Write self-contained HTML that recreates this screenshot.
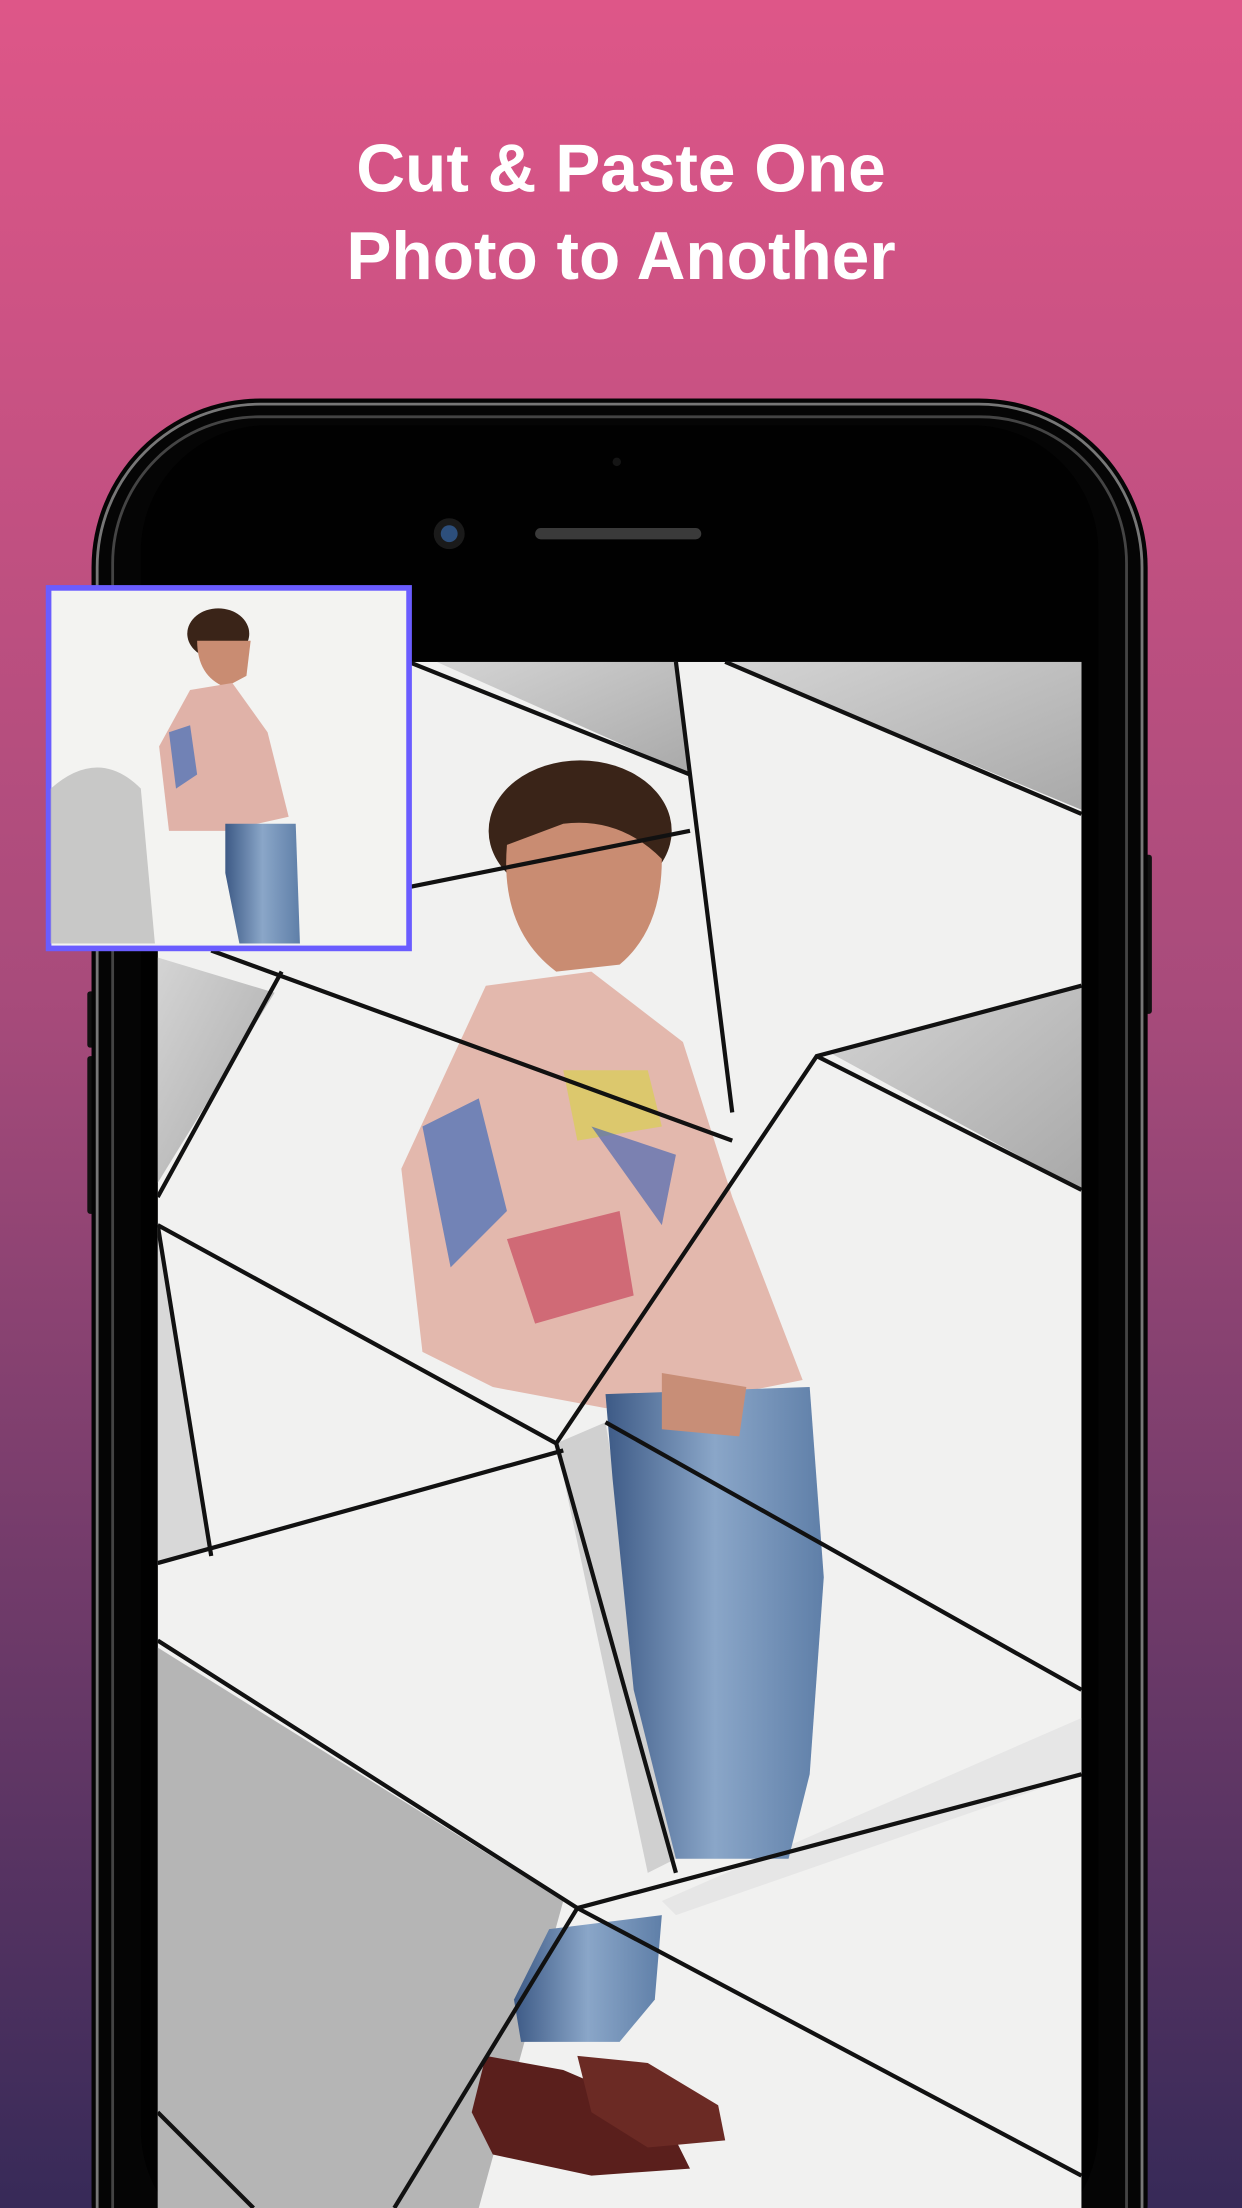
<!DOCTYPE html>
<html><head><meta charset="utf-8"><style>
html,body{margin:0;padding:0;width:1242px;height:2208px;overflow:hidden}
svg{display:block;position:absolute;left:0;top:0}
</style></head><body>
<svg width="1242" height="2208" viewBox="0 0 882 1568" xmlns="http://www.w3.org/2000/svg">
<defs>
<linearGradient id="bg" x1="0" y1="0" x2="0" y2="1">
<stop offset="0" stop-color="#de5688"/>
<stop offset="0.45" stop-color="#a84b7b"/>
<stop offset="1" stop-color="#372a58"/>
</linearGradient>
<linearGradient id="gr" x1="0" y1="0" x2="1" y2="1">
<stop offset="0" stop-color="#d4d4d4"/><stop offset="1" stop-color="#a9a9a9"/>
</linearGradient>
<linearGradient id="jean" x1="0" y1="0" x2="1" y2="0">
<stop offset="0" stop-color="#3d5a86"/><stop offset="0.5" stop-color="#8aa6c8"/><stop offset="1" stop-color="#5f7fa8"/>
</linearGradient>
<clipPath id="scr"><rect x="112" y="470" width="656" height="1098"/></clipPath>
<clipPath id="all"><rect x="0" y="0" width="882" height="1568"/></clipPath>
</defs>
<g clip-path="url(#all)">
<rect width="882" height="1568" fill="url(#bg)"/>
<text x="441" y="136" text-anchor="middle" font-family="Liberation Sans, sans-serif" font-weight="bold" font-size="48" fill="#fff">Cut &amp; Paste One</text>
<text x="441" y="198" text-anchor="middle" font-family="Liberation Sans, sans-serif" font-weight="bold" font-size="48" fill="#fff">Photo to Another</text>
<rect x="62" y="704" width="6" height="40" rx="2" fill="#111"/>
<rect x="62" y="750" width="6" height="112" rx="2" fill="#111"/>
<rect x="812" y="607" width="6" height="113" rx="2" fill="#111"/>
<rect x="65" y="283" width="750" height="1400" rx="120" fill="#050505"/>
<rect x="69" y="287" width="742" height="1400" rx="116" fill="none" stroke="#777" stroke-width="2"/>
<rect x="80" y="296" width="720" height="1400" rx="104" fill="none" stroke="#444" stroke-width="2"/>
<rect x="100" y="302" width="680" height="1300" rx="90" fill="#010101"/>
<circle cx="319" cy="379" r="11" fill="#1a1a1a"/>
<circle cx="319" cy="379" r="6" fill="#2d4f7c"/>
<circle cx="438" cy="328" r="3" fill="#151515"/>
<rect x="380" y="375" width="118" height="8" rx="4" fill="#3a3a3a"/>
<g clip-path="url(#scr)">
<rect x="112" y="470" width="656" height="1098" fill="#f1f1f0"/>
<polygon points="310,470 480,470 490,550" fill="url(#gr)"/>
<polygon points="515,470 768,470 768,575" fill="url(#gr)"/>
<polygon points="590,748 768,700 768,845" fill="url(#gr)"/>
<polygon points="112,680 195,705 112,840" fill="url(#gr)"/>
<polygon points="112,1170 400,1350 340,1568 112,1568" fill="#b5b5b5"/>
<polygon points="112,870 150,1100 112,1110" fill="#d8d8d8"/>
<polygon points="395,1025 430,1010 480,1320 460,1330" fill="#d0d0d0"/>
<polygon points="470,1350 768,1220 768,1260 480,1360" fill="#e6e6e6"/>
<ellipse cx="412" cy="590" rx="65" ry="50" fill="#3a2418"/>
<path d="M360 600 Q355 660 395 690 L440 685 Q470 660 470 610 Q440 580 400 585 Z" fill="#c98c72"/>
<path d="M345 700 L420 690 L485 740 L520 850 L570 980 L520 990 L430 1000 L350 985 L300 960 L285 830 Z" fill="#e3b8ad"/>
<path d="M300 800 L340 780 L360 860 L320 900 Z" fill="#5575b8" opacity="0.8"/>
<path d="M400 760 L460 760 L470 800 L410 810 Z" fill="#d9cc5c" opacity="0.8"/>
<path d="M360 880 L440 860 L450 920 L380 940 Z" fill="#c8485e" opacity="0.7"/>
<path d="M420 800 L480 820 L470 870 Z" fill="#4e6ab2" opacity="0.7"/>
<path d="M430 990 L575 985 L585 1120 L575 1260 L560 1320 L480 1320 L450 1200 L435 1050 Z" fill="url(#jean)"/>
<path d="M470 975 L530 985 L525 1020 L470 1015 Z" fill="#c88e77"/>
<path d="M390 1370 L470 1360 L465 1420 L440 1450 L370 1450 L365 1420 Z" fill="url(#jean)"/>
<path d="M345 1460 L400 1470 L470 1500 L490 1540 L420 1545 L350 1530 L335 1500 Z" fill="#5a1f1c"/>
<path d="M410 1460 L460 1465 L510 1495 L515 1520 L460 1525 L420 1500 Z" fill="#6b2a24"/>
<g stroke="#111" stroke-width="3" fill="none">
<path d="M290 470 L490 550"/><path d="M480 470 L520 790"/><path d="M515 470 L768 578"/>
<path d="M290 630 L490 590"/><path d="M150 675 L520 810"/>
<path d="M200 690 L112 850"/><path d="M112 870 L395 1025"/>
<path d="M112 870 L150 1105"/><path d="M395 1025 L580 750 L768 700"/><path d="M580 750 L768 845"/>
<path d="M395 1025 L480 1330"/><path d="M112 1110 L400 1030"/>
<path d="M430 1010 L768 1200"/><path d="M112 1165 L410 1355 L768 1260"/>
<path d="M410 1355 L280 1568"/><path d="M410 1355 L768 1545"/>
<path d="M112 1500 L180 1568"/>
</g>
</g>
<rect x="34.5" y="417.5" width="256" height="256" fill="#f3f3f1" stroke="#6a5cff" stroke-width="4"/>
<path d="M36 560 Q70 530 100 560 L110 670 L36 670 Z" fill="#bdbdbd" opacity="0.8"/>
<ellipse cx="155" cy="450" rx="22" ry="18" fill="#3a2418"/>
<path d="M140 455 Q140 480 160 488 L175 480 L178 455 Z" fill="#c98c72"/>
<path d="M135 490 L165 485 L190 520 L205 580 L160 590 L120 590 L113 530 Z" fill="#e0b2a8"/>
<path d="M120 520 L135 515 L140 550 L125 560 Z" fill="#5575b8" opacity="0.8"/>
<path d="M160 585 L210 585 L213 670 L170 670 L160 620 Z" fill="url(#jean)"/>
</g>
</svg>
</body></html>
